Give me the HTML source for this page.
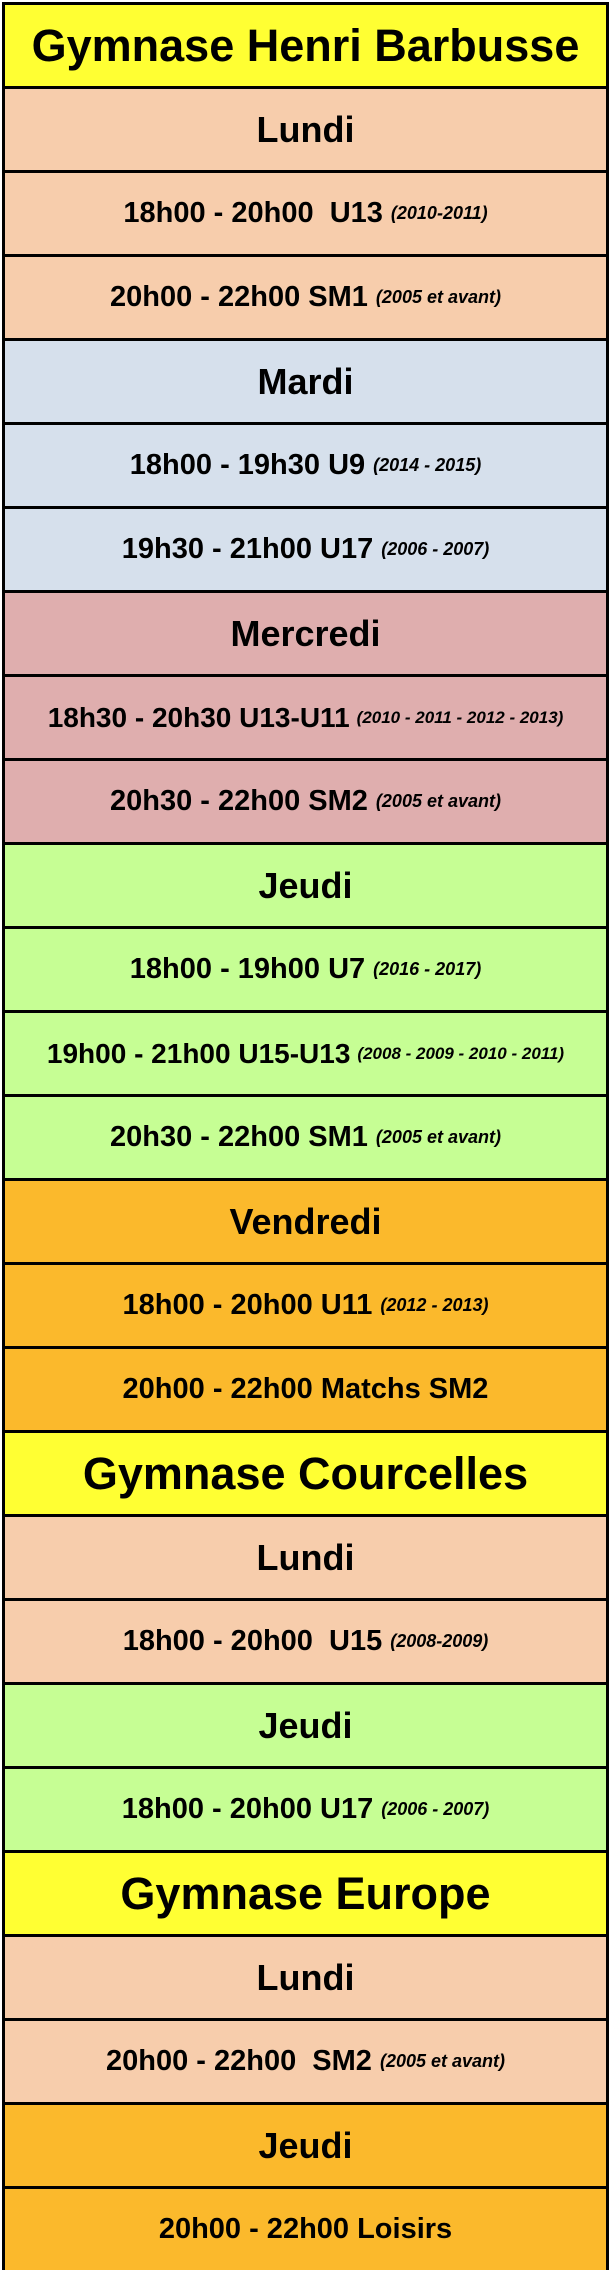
<!DOCTYPE html>
<html><head><meta charset="utf-8"><style>
html,body{margin:0;padding:0;background:#fff;width:610px;height:2272px;overflow:hidden}
.t{position:absolute;left:2px;top:2px;width:607px}
.r{box-sizing:border-box;height:84px;border:3px solid #000;border-bottom:none;display:flex;align-items:center;justify-content:center;font-family:"Liberation Sans",Arial,sans-serif;font-weight:bold;color:#000;white-space:nowrap}
.g{background:#ffff33;font-size:45px}
.d{font-size:36px}
.s{font-size:29px}
.s i{font-size:18px;margin-left:8px}
.p{background:#f7cdac}.b{background:#d6e0ec}.k{background:#dfaeae}.v{background:#c6fe94}.o{background:#fbb92c}
.n{font-size:28px}.n i{font-size:17px;margin-left:7px}
</style></head><body><div class="t">
<div class="r g">Gymnase Henri Barbusse</div>
<div class="r d p">Lundi</div>
<div class="r s p">18h00 - 20h00&nbsp;&nbsp;U13<i>(2010-2011)</i></div>
<div class="r s p">20h00 - 22h00 SM1<i>(2005 et avant)</i></div>
<div class="r d b">Mardi</div>
<div class="r s b">18h00 - 19h30 U9<i>(2014 - 2015)</i></div>
<div class="r s b">19h30 - 21h00 U17<i>(2006 - 2007)</i></div>
<div class="r d k">Mercredi</div>
<div class="r s k n">18h30 - 20h30 U13-U11<i>(2010 - 2011 - 2012 - 2013)</i></div>
<div class="r s k">20h30 - 22h00 SM2<i>(2005 et avant)</i></div>
<div class="r d v">Jeudi</div>
<div class="r s v">18h00 - 19h00 U7<i>(2016 - 2017)</i></div>
<div class="r s v n">19h00 - 21h00 U15-U13<i>(2008 - 2009 - 2010 - 2011)</i></div>
<div class="r s v">20h30 - 22h00 SM1<i>(2005 et avant)</i></div>
<div class="r d o">Vendredi</div>
<div class="r s o">18h00 - 20h00 U11<i>(2012 - 2013)</i></div>
<div class="r s o">20h00 - 22h00 Matchs SM2</div>
<div class="r g">Gymnase Courcelles</div>
<div class="r d p">Lundi</div>
<div class="r s p">18h00 - 20h00&nbsp;&nbsp;U15<i>(2008-2009)</i></div>
<div class="r d v">Jeudi</div>
<div class="r s v">18h00 - 20h00 U17<i>(2006 - 2007)</i></div>
<div class="r g">Gymnase Europe</div>
<div class="r d p">Lundi</div>
<div class="r s p">20h00 - 22h00&nbsp;&nbsp;SM2<i>(2005 et avant)</i></div>
<div class="r d o">Jeudi</div>
<div class="r s o">20h00 - 22h00 Loisirs</div>
</div></body></html>
